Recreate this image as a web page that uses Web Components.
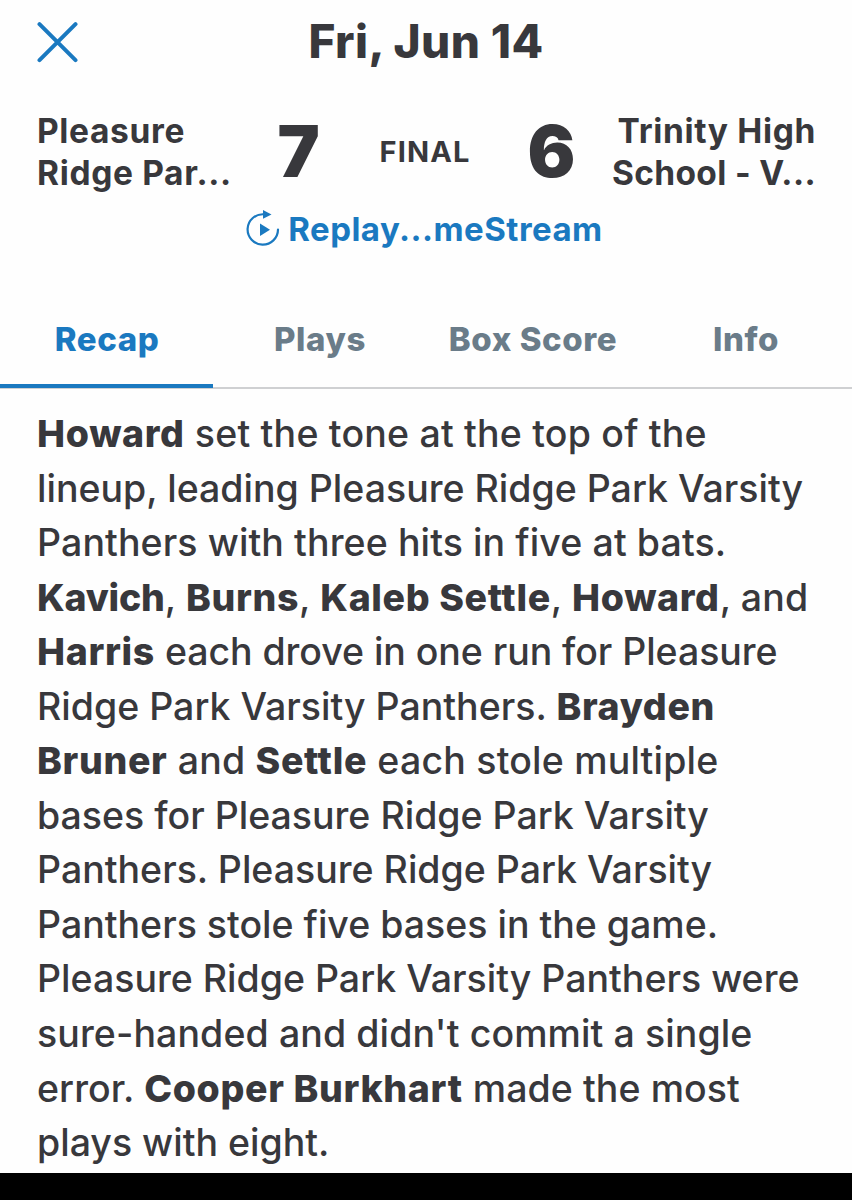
<!DOCTYPE html>
<html lang="en">
<head>
<meta charset="utf-8">
<title>Game Recap</title>
<style>
  body {
    margin: 0;
    background: #000;
    color: #38383c;
    font-family: Inter, "Liberation Sans", sans-serif;
    --color--link: #1a79c0;
    --color--muted: #6a7c89;
    --color--line: #cfd0d2;
  }
  .tight {
    letter-spacing: -0.2px;
  }
</style>
</head>
<body>
<game-page>
  <page-title>Fri, Jun 14</page-title>
  <score-board home="7" away="6" status="FINAL">
    <span slot="home">Pleasure<br>Ridge Par...</span>
    <span slot="away">Trinity High<br><span style="letter-spacing:0.35px">School - V...</span></span>
  </score-board>
  <replay-link>Replay...meStream</replay-link>
  <tab-bar>
    <tab-item active>Recap</tab-item>
    <tab-item>Plays</tab-item>
    <tab-item>Box Score</tab-item>
    <tab-item>Info</tab-item>
  </tab-bar>
  <game-recap>
    <recap-line tracking="0.2"><b>Howard</b> set the tone at the top of the</recap-line>
    <recap-line>lineup, leading Pleasure Ridge Park Varsity</recap-line>
    <recap-line tracking="0.1">Panthers with three hits in five at bats.</recap-line>
    <recap-line tracking="0.1"><b class="tight">Kavich</b>, <b>Burns</b>, <b>Kaleb Settle</b>, <b>Howard</b>, and</recap-line>
    <recap-line tracking="-0.06"><b>Harris</b> each drove in one run for Pleasure</recap-line>
    <recap-line>Ridge Park Varsity Panthers. <b>Brayden</b></recap-line>
    <recap-line tracking="0.2"><b>Bruner</b> and <b>Settle</b> each stole multiple</recap-line>
    <recap-line>bases for Pleasure Ridge Park Varsity</recap-line>
    <recap-line>Panthers. Pleasure Ridge Park Varsity</recap-line>
    <recap-line>Panthers stole five bases in the game.</recap-line>
    <recap-line>Pleasure Ridge Park Varsity Panthers were</recap-line>
    <recap-line tracking="0.1">sure-handed and didn't commit a single</recap-line>
    <recap-line tracking="0.08">error. <b>Cooper Burkhart</b> made the most</recap-line>
    <recap-line>plays with eight.</recap-line>
  </game-recap>
</game-page>

<script>
class GamePage extends HTMLElement {
  constructor() {
    super();
    this.attachShadow({ mode: 'open' });
  }

  connectedCallback() {
    this.shadowRoot.innerHTML = /*html*/ `
      <style>
        :host{
          display:flex;
          flex-direction:column;
          box-sizing:border-box;
          width:100%;
          height:1173px;
          background:#fefefe;
          overflow:hidden;
        }
      </style>
      <slot></slot>
    `;
  }
}
customElements.define('game-page', GamePage);

class PageTitle extends HTMLElement {
  constructor() {
    super();
    this.attachShadow({ mode: 'open' });
  }

  connectedCallback() {
    this.shadowRoot.innerHTML = /*html*/ `
      <style>
        :host{
          display:grid;
          grid-template-columns:1fr auto 1fr;
          align-items:center;
          height:84px;
          padding:0 36px;
          flex:none;
        }
        svg{
          display:block;
          color:var(--color--link);
        }
        h1{
          margin:0 0 3px;
          font-size:46px;
          line-height:56px;
          font-weight:800;
          letter-spacing:0.4px;
          white-space:nowrap;
        }
      </style>
      <svg width="42" height="42" viewBox="0 0 42 42" fill="none" stroke="currentColor" stroke-width="4" stroke-linecap="round">
        <path d="M3.5 3.2L39.5 39.2M39.5 3.2L3.5 39.2"/>
      </svg>
      <h1><slot></slot></h1>
    `;
  }
}
customElements.define('page-title', PageTitle);

class ScoreBoard extends HTMLElement {
  constructor() {
    super();
    this.attachShadow({ mode: 'open' });
  }

  connectedCallback() {
    this.shadowRoot.innerHTML = /*html*/ `
      <style>
        :host{
          display:grid;
          grid-template-columns:206px 111px 1fr 111px 209px;
          align-items:center;
          box-sizing:border-box;
          height:110px;
          padding:26px 36px 0 37px;
          flex:none;
        }
        .team{
          font-size:33.5px;
          line-height:42px;
          font-weight:650;
          letter-spacing:0.65px;
          white-space:nowrap;
        }
        .team--away{
          justify-self:end;
          text-align:right;
        }
        .score{
          font-size:71px;
          line-height:84px;
          margin-top:-2px;
          font-weight:870;
          text-align:center;
        }
        .status{
          margin-top:-2px;
          font-size:29px;
          font-weight:740;
          letter-spacing:1.1px;
          text-align:center;
        }
      </style>
      <div class="team"><slot name="home"></slot></div>
      <div class="score">${this.getAttribute('home')}</div>
      <div class="status">${this.getAttribute('status')}</div>
      <div class="score">${this.getAttribute('away')}</div>
      <div class="team team--away"><slot name="away"></slot></div>
    `;
  }
}
customElements.define('score-board', ScoreBoard);

class ReplayLink extends HTMLElement {
  constructor() {
    super();
    this.attachShadow({ mode: 'open' });
  }

  connectedCallback() {
    this.shadowRoot.innerHTML = /*html*/ `
      <style>
        :host{
          display:flex;
          align-items:center;
          justify-content:center;
          gap:8px;
          height:42px;
          margin-top:14px;
          padding-right:3px;
          flex:none;
          color:var(--color--link);
          font-size:33px;
          line-height:42px;
          font-weight:680;
          letter-spacing:0.48px;
          white-space:nowrap;
        }
        svg{
          display:block;
          flex:none;
        }
      </style>
      <svg width="34" height="40" viewBox="0 0 34 40">
        <path d="M18 5.3A15.2 15.2 0 1 0 32 20.5" fill="none" stroke="currentColor" stroke-width="2.2" stroke-linecap="round"/>
        <path d="M17 1L25.5 5.4L17 9.8Z" fill="currentColor"/>
        <path d="M14 14.5L24 20.7L14 27Z" fill="currentColor"/>
      </svg>
      <span><slot></slot></span>
    `;
  }
}
customElements.define('replay-link', ReplayLink);

class TabBar extends HTMLElement {
  constructor() {
    super();
    this.attachShadow({ mode: 'open' });
  }

  connectedCallback() {
    this.shadowRoot.innerHTML = /*html*/ `
      <style>
        :host{
          display:grid;
          grid-template-columns:repeat(4, 1fr);
          height:94px;
          margin-top:45px;
          flex:none;
          box-sizing:border-box;
          box-shadow:inset 0 -2px var(--color--line);
        }
      </style>
      <slot></slot>
    `;
  }
}
customElements.define('tab-bar', TabBar);

class TabItem extends HTMLElement {
  constructor() {
    super();
    this.attachShadow({ mode: 'open' });
  }

  connectedCallback() {
    this.shadowRoot.innerHTML = /*html*/ `
      <style>
        :host{
          display:flex;
          justify-content:center;
          box-sizing:border-box;
          height:93px;
          padding:23px 0 0 1px;
          color:var(--color--muted);
          font-size:33px;
          line-height:42px;
          font-weight:770;
          letter-spacing:0.6px;
          white-space:nowrap;
        }
        :host([active]){
          color:var(--color--link);
          border-bottom:4px solid var(--color--link);
        }
      </style>
      <slot></slot>
    `;
  }
}
customElements.define('tab-item', TabItem);

class GameRecap extends HTMLElement {
  constructor() {
    super();
    this.attachShadow({ mode: 'open' });
  }

  connectedCallback() {
    this.shadowRoot.innerHTML = /*html*/ `
      <style>
        :host{
          display:block;
          padding:18px 37px 0;
          font-size:37.5px;
          line-height:54.55px;
          font-weight:500;
        }
      </style>
      <slot></slot>
    `;
  }
}
customElements.define('game-recap', GameRecap);

class RecapLine extends HTMLElement {
  constructor() {
    super();
    this.attachShadow({ mode: 'open' });
  }

  connectedCallback() {
    this.shadowRoot.innerHTML = /*html*/ `
      <style>
        :host{
          display:block;
          letter-spacing:${this.getAttribute('tracking') || 0}px;
          white-space:nowrap;
        }
        ::slotted(b){
          font-weight:790;
          letter-spacing:0.65px;
        }
      </style>
      <slot></slot>
    `;
  }
}
customElements.define('recap-line', RecapLine);
</script>
</body>
</html>
